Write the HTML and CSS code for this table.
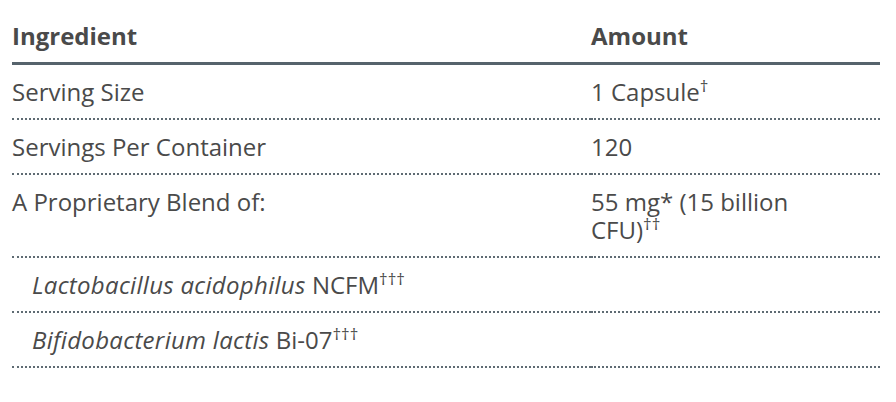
FILE: index.html
```html
<!DOCTYPE html>
<html>
<head>
<meta charset="utf-8">
<link rel="stylesheet" href="styles.css">
</head>
<body>
<table class="facts">
  <thead>
    <tr><th class="col-ing">Ingredient</th><th class="col-amt">Amount</th></tr>
  </thead>
  <tbody>
    <tr><td>Serving Size</td><td class="amt">1 Capsule<sup>†</sup></td></tr>
    <tr><td>Servings Per Container</td><td class="amt">120</td></tr>
    <tr><td>A Proprietary Blend of:</td><td class="amt">55 mg* (15 billion CFU)<sup>††</sup></td></tr>
    <tr><td class="sub"><em>Lactobacillus acidophilus</em> NCFM<sup>†††</sup></td><td class="amt"></td></tr>
    <tr><td class="sub"><em>Bifidobacterium lactis</em> Bi-07<sup>†††</sup></td><td class="amt"></td></tr>
  </tbody>
</table>
</body>
</html>
```
FILE: styles.css
```css
html, body { margin: 0; padding: 0; background: #fff; }
body {
  font-family: "Open Sans", "Liberation Sans", sans-serif;
  color: #4a4a4a;
  padding: 0 16px 0 12px;
}
.facts {
  width: 868px;
  border-collapse: collapse;
  font-size: 24px;
  line-height: 28px;
}
.facts th {
  text-align: left;
  font-weight: 700;
  color: #4a4a4a;
  padding: 22px 0 12px;
  border-bottom: 3px solid #56636c;
}
.col-ing { width: 579px; }
.facts td {
  padding: 13px 0 12px;
  vertical-align: top;
  border-bottom: 2px dotted #5f6b73;
}
.facts td.amt { padding-right: 60px; }
.facts td.sub { padding-left: 20px; }
.facts em { letter-spacing: 0.3px; }
sup {
  font-size: 17px;
  line-height: 0;
  vertical-align: 9px;
}
```
